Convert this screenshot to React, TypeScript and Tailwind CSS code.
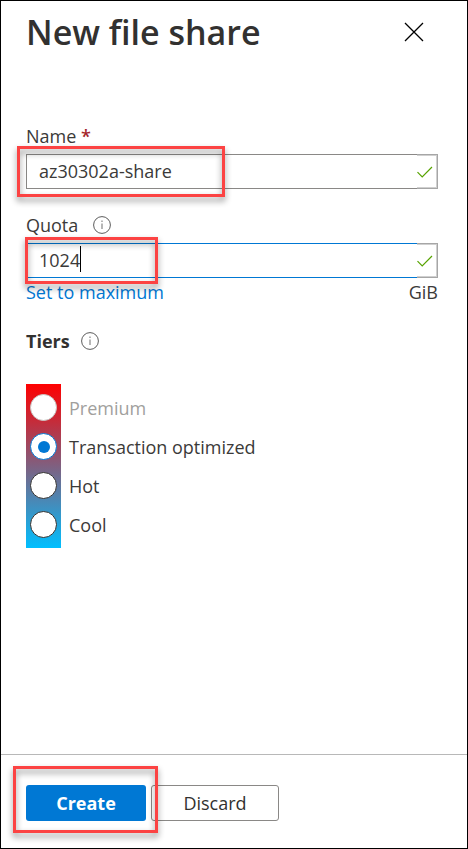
import { useState } from 'react';

const tiers = [
  { id: 'premium', label: 'Premium', disabled: true },
  { id: 'transaction', label: 'Transaction optimized', disabled: false },
  { id: 'hot', label: 'Hot', disabled: false },
  { id: 'cool', label: 'Cool', disabled: false },
];

function InfoIcon() {
  return (
    <svg width="18" height="18" viewBox="0 0 18 18" fill="none" aria-hidden="true">
      <circle cx="9" cy="9" r="8.4" stroke="#5c5c5c" />
      <path d="M9 7.5V13" stroke="#858585" strokeWidth="1.2" />
      <path d="M9 4.6V6" stroke="#858585" strokeWidth="1.2" />
    </svg>
  );
}

function ValidMark() {
  return (
    <span className="pointer-events-none absolute inset-y-0 right-0 flex w-[21px] items-center border border-l-0 border-[#a6a6a6] bg-white shadow-[inset_-1px_0_0_#d0d0d0,inset_0_1px_0_#d0d0d0,inset_0_-1px_0_#d0d0d0]">
      <svg width="16" height="12" viewBox="0 0 16 12" fill="none" aria-hidden="true">
        <path d="M0.5 6.2L5.2 10.9L15 1" stroke="#57a300" strokeWidth="1.2" />
      </svg>
    </span>
  );
}

/* Red callout frame placed over a control */
function Callout({ className }: { className: string }) {
  return (
    <span
      className={`pointer-events-none absolute z-10 border-[3px] border-[#fc4343] drop-shadow-[0_4px_3px_rgba(0,0,0,0.45)] ${className}`}
    />
  );
}

export default function App() {
  const [name, setName] = useState('az30302a-share');
  const [quota, setQuota] = useState('1024');
  const [tier, setTier] = useState('transaction');

  return (
    <main className="flex min-h-screen flex-col border border-black bg-white font-['Open_Sans','Noto_Sans',sans-serif] text-lg leading-6 text-[#3b3a39]">
      <header className="flex items-center justify-between pt-2 pr-[43px] pl-[25px]">
        <h1 className="text-[34px] leading-[46px] font-semibold text-[#323130]">New file share</h1>
        <button type="button" aria-label="Close" className="text-black">
          <svg width="20" height="20" viewBox="0 0 20 20" fill="none" aria-hidden="true">
            <path d="M1 1L19 19M19 1L1 19" stroke="currentColor" strokeWidth="1.3" />
          </svg>
        </button>
      </header>

      <form id="share" className="flex-1 pt-[69px] pr-[29px] pl-[25px]" onSubmit={(e) => e.preventDefault()}>
        <label htmlFor="name" className="block">
          Name <span className="font-semibold text-[#a4262c]">*</span>
        </label>
        <div className="relative mt-[6px]">
          <input
            id="name"
            value={name}
            onChange={(e) => setName(e.target.value)}
            className="block h-[35px] w-full border border-[#8a8886] px-3 pb-[2px] outline-none"
          />
          <ValidMark />
          <Callout className="-top-2 -left-[9px] h-[51px] w-[208px]" />
        </div>

        <div className="mt-6 flex items-center gap-[15px]">
          <label htmlFor="quota">Quota</label>
          <InfoIcon />
        </div>
        <div className="relative mt-[6px]">
          <input
            id="quota"
            value={quota}
            onChange={(e) => setQuota(e.target.value)}
            className="block h-[35px] w-full border border-[#0078d4] px-3 pb-[2px] outline-none"
          />
          <span className="absolute top-[3px] left-[54px] h-[26px] w-px bg-black" />
          <ValidMark />
          <Callout className="-top-[6px] -left-px h-[47px] w-[133px]" />
        </div>
        <div className="mt-[2px] flex justify-between">
          <button type="button" className="text-[#0078d4]" onClick={() => setQuota('5120')}>
            Set to maximum
          </button>
          <span>GiB</span>
        </div>

        <fieldset>
          <legend className="flex items-center gap-[11px] pt-[25px] font-bold text-[#323130]">
            Tiers <InfoIcon />
          </legend>
          <div className="mt-[31px] bg-[linear-gradient(to_bottom,#ff0000,#00bfff)] bg-[length:35px_100%] bg-no-repeat py-1">
            {tiers.map((t) => (
              <label
                key={t.id}
                className={`flex h-[39px] items-center gap-3 pl-1 ${t.disabled ? 'text-[#a19f9d]' : ''}`}
              >
                <input
                  type="radio"
                  name="tier"
                  disabled={t.disabled}
                  checked={tier === t.id}
                  onChange={() => setTier(t.id)}
                  className="grid size-[27px] shrink-0 appearance-none place-items-center rounded-full border border-[#323130] bg-white before:size-3 before:rounded-full checked:border-[#0078d4] checked:before:bg-[#0078d4] disabled:border-[#c8c6c4]"
                />
                {t.label}
              </label>
            ))}
          </div>
        </fieldset>
      </form>

      <footer className="flex gap-[5px] border-t border-[#b8b8b8] pt-[30px] pb-[27px] pl-[25px]">
        <div className="relative">
          <button type="submit" form="share" className="block h-9 w-[120px] rounded-[3px] bg-[#0078d4] font-bold text-white">
            Create
          </button>
          <Callout className="-top-[19px] -left-[13px] h-[67px] w-[145px]" />
        </div>
        <button type="button" className="h-9 w-32 rounded-[3px] border border-[#8a8886] text-[#323130]">
          Discard
        </button>
      </footer>
    </main>
  );
}
